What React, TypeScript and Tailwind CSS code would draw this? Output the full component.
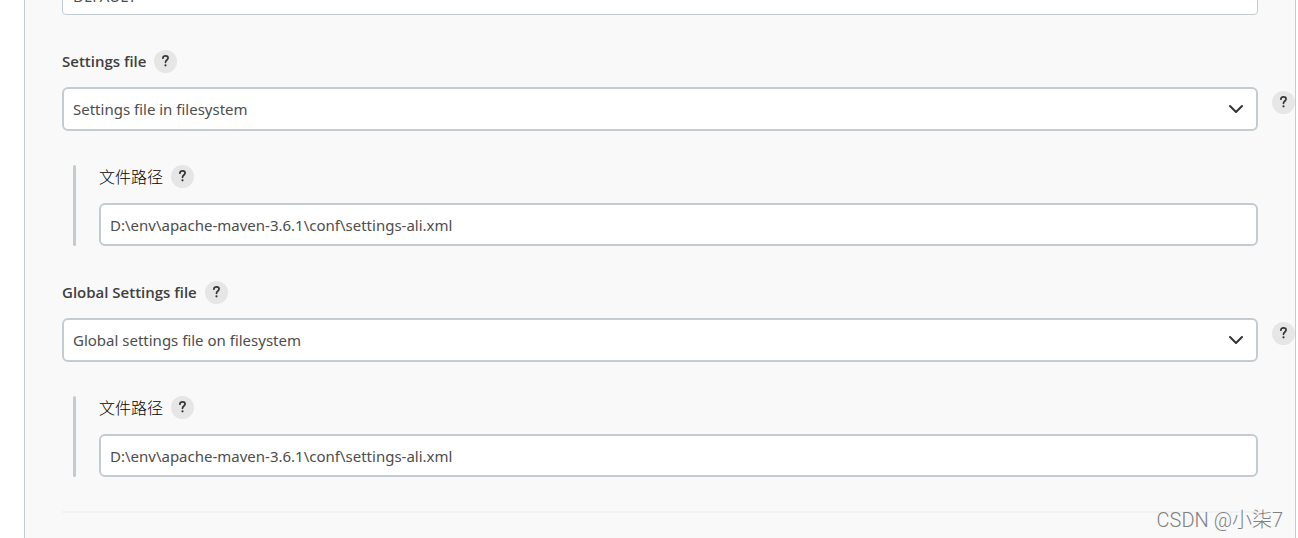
import { useId } from "react";

const HelpButton = ({ subject, className = "" }: { subject: string; className?: string }) => (
  <button
    type="button"
    aria-label={`Help for ${subject}`}
    className={`flex size-[23px] shrink-0 items-center justify-center rounded-full bg-[#e6e6e6] text-[#333333] ${className}`}
  >
    <svg viewBox="0 0 23 23" className="size-[23px]" fill="none" aria-hidden="true">
      <path
        d="M8.9 8.2c0-1.5 1.1-2.3 2.6-2.3s2.6.8 2.6 2.2c0 1.9-2.6 2-2.6 4.2"
        stroke="currentColor"
        strokeWidth="1.7"
        strokeLinecap="round"
        strokeLinejoin="round"
      />
      <circle cx="11.5" cy="15.3" r="1.1" fill="currentColor" />
    </svg>
  </button>
);

interface FileSettingProps {
  label: string;
  option: string;
  path: string;
}

const FileSetting = ({ label, option, path }: FileSettingProps) => {
  const id = useId();

  return (
    <section className="mt-[35px]">
      <div className="flex h-[23px] items-center gap-2">
        <label htmlFor={`${id}-type`} className="font-semibold">
          {label}
        </label>
        <HelpButton subject={label} />
      </div>

      <div className="mt-3.5 flex items-start gap-3.5">
        <div className="relative flex-1">
          <select
            id={`${id}-type`}
            className="block h-11 w-full appearance-none rounded-md border-2 border-[#c3ccd1] bg-white px-[9px] font-['Noto_Sans',sans-serif] text-[#4d4d4d]"
          >
            <option>{option}</option>
          </select>
          <svg
            viewBox="0 0 16 10"
            className="pointer-events-none absolute top-[17px] right-3.5 h-2.5 w-4"
            fill="none"
            stroke="#333333"
            strokeWidth="2"
            strokeLinecap="round"
            strokeLinejoin="round"
            aria-hidden="true"
          >
            <path d="M2 2l6 6 6-6" />
          </svg>
        </div>
        <HelpButton subject={option} className="mt-1" />
      </div>

      {/* Nested path field */}
      <div className="mt-[34px] mr-[37px] ml-[11px] flex">
        <div className="w-[3px] shrink-0 rounded-sm bg-[#c3ccd1]" />
        <div className="ml-[23px] flex-1">
          <div className="flex h-[23px] items-center gap-2">
            <label htmlFor={`${id}-path`} className="text-base font-light text-black">
              文件路径
            </label>
            <HelpButton subject="文件路径" />
          </div>
          <input
            id={`${id}-path`}
            type="text"
            defaultValue={path}
            className="mt-[15px] block h-[43px] w-full rounded-md border-2 border-[#c3ccd1] bg-white px-[9px] font-['Noto_Sans',sans-serif] text-[#4d4d4d]"
          />
        </div>
      </div>
    </section>
  );
};

const App = () => {
  return (
    <div className="relative h-screen overflow-hidden bg-white pr-0.5 pl-6 font-['Open_Sans','Noto_Sans_CJK_SC',sans-serif] text-[15px] text-[#404040]">
      <main className="flow-root min-h-full border-x border-[#c3ccd1] bg-[#f9f9f9] pl-[37px]">
        <div className="-mt-[23px] mr-[37px]">
          <select
            aria-label="Maven Version"
            className="block h-[38px] w-full appearance-none rounded-sm border border-[#c3ccd1] bg-white px-2.5 font-['Noto_Sans',sans-serif] text-[#4d4d4d]"
          >
            <option>DEFAULT</option>
          </select>
        </div>

        <FileSetting
          label="Settings file"
          option="Settings file in filesystem"
          path="D:\env\apache-maven-3.6.1\conf\settings-ali.xml"
        />
        <FileSetting
          label="Global Settings file"
          option="Global settings file on filesystem"
          path="D:\env\apache-maven-3.6.1\conf\settings-ali.xml"
        />

        <hr className="mt-[34px] mr-[37px] border-t-2 border-[#f2f2f2]" />
      </main>

      <span className="absolute right-[15px] bottom-1 font-['Roboto','Noto_Sans_CJK_SC',sans-serif] text-xl leading-7 font-light text-[#808080]">
        CSDN @小柒7
      </span>
    </div>
  );
};

export default App;
